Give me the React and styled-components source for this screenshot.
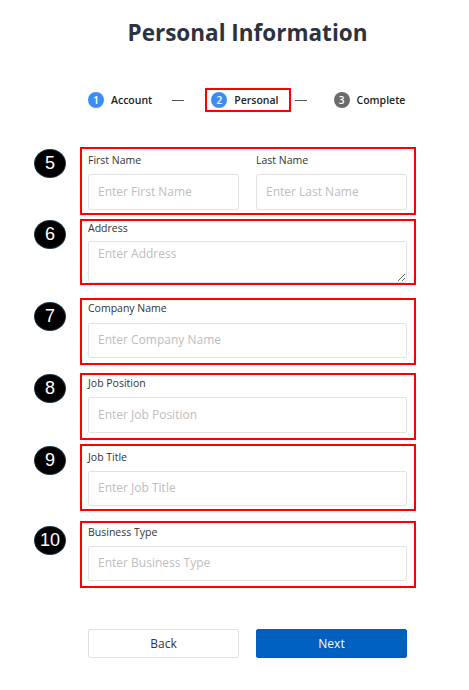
import React from "react";
import styled, { createGlobalStyle } from "styled-components";

const GlobalStyle = createGlobalStyle`
  body {
    margin: 0;
    background: #fff;
    font-family: "Open Sans", "Noto Sans", Arial, sans-serif;
  }
`;

const Page = styled.div`
  width: 469px;
  padding-bottom: 30px;
`;

const Title = styled.h1`
  margin: 0;
  padding-top: 18px;
  font-size: 22.5px;
  line-height: 30px;
  font-weight: 700;
  color: #2c333f;
  text-align: center;
  padding-left: 26px;
`;

const Stepper = styled.div`
  display: flex;
  align-items: center;
  margin-top: 40px;
  padding-left: 82px;
`;

const Step = styled.div`
  display: flex;
  align-items: center;
  gap: 7px;
  height: 20px;
  padding: 0 10px 0 4px;
  border: 2px solid ${(p) => (p.$boxed ? "#ff0000" : "transparent")};
  font-size: 10.5px;
  font-weight: 600;
  color: #222;
`;

const StepDot = styled.span`
  width: 16px;
  height: 16px;
  border-radius: 50%;
  background: ${(p) => (p.$done ? "#3b8cf5" : "#6b6b6b")};
  color: #fff;
  font-size: 10px;
  font-weight: 600;
  display: flex;
  align-items: center;
  justify-content: center;
`;

const Dash = styled.span`
  width: 12px;
  height: 1px;
  background: #555;
  margin: 0 21px 0 ${(p) => p.$ml}px;
`;

const Form = styled.div`
  margin-top: 35px;
`;

const Row = styled.div`
  display: flex;
  align-items: flex-start;
  padding-left: 35px;
  margin-top: ${(p) => p.$mt}px;
`;

const Badge = styled.div`
  width: 30px;
  height: 27px;
  margin-top: ${(p) => p.$bt}px;
  border-radius: 50%;
  background: #000;
  box-shadow: 0 0 0 1px #1c3645;
  color: #fff;
  font-family: "Liberation Sans", Arial, sans-serif;
  font-size: 18px;
  display: flex;
  align-items: center;
  justify-content: center;
  flex-shrink: 0;
`;

const Box = styled.div`
  box-sizing: border-box;
  width: 336px;
  margin-left: 15px;
  border: 2px solid #ff0000;
  padding: ${(p) => p.$pt}px 7px ${(p) => p.$pb}px 6px;
`;

const Cols = styled.div`
  display: grid;
  grid-template-columns: 1fr 1fr;
  gap: 17px;
`;

const Field = styled.label`
  display: flex;
  flex-direction: column;
`;

const Label = styled.span`
  font-size: 10.5px;
  line-height: 15px;
  color: #333;
  margin-bottom: ${(p) => p.$gap ?? 6}px;
`;

const Input = styled.input`
  box-sizing: border-box;
  width: 100%;
  height: ${(p) => p.$h ?? 36}px;
  border: 1px solid #e3e3e3;
  border-radius: 2px;
  padding: 0 9px 2px;
  font-family: inherit;
  font-size: 12px;
  color: #333;
  outline: none;
  &::placeholder {
    color: #bdbdbd;
  }
`;

const TextArea = styled.textarea`
  box-sizing: border-box;
  width: 100%;
  height: 42px;
  display: block;
  border: 1px solid #e3e3e3;
  border-radius: 2px;
  padding: 3px 9px;
  font-family: inherit;
  font-size: 12px;
  line-height: 17px;
  color: #333;
  outline: none;
  resize: vertical;
  &::placeholder {
    color: #bdbdbd;
  }
`;

const Actions = styled.div`
  display: grid;
  grid-template-columns: 151px 151px;
  gap: 17px;
  padding-left: 88px;
  margin-top: 41px;
`;

const Button = styled.button`
  height: 29px;
  border-radius: 2px;
  border: 1px solid ${(p) => (p.$primary ? "#0060bf" : "#e0e0e0")};
  background: ${(p) => (p.$primary ? "#0060bf" : "#fff")};
  color: ${(p) => (p.$primary ? "#fff" : "#333")};
  font-family: inherit;
  font-size: 12px;
  cursor: pointer;
`;

const rows = [
  { n: 9, label: "Job Title", mt: 4, bt: 3, pt: 4, pb: 3, h: 35 },
  { n: 10, label: "Business Type", mt: 10, bt: 6, pt: 2, pb: 5, h: 35 },
];

export default function App() {
  return (
    <Page>
      <GlobalStyle />
      <Title>Personal Information</Title>

      <Stepper>
        <Step>
          <StepDot $done>1</StepDot>
          Account
        </Step>
        <Dash $ml={8} />
        <Step $boxed>
          <StepDot $done>2</StepDot>
          Personal
        </Step>
        <Dash $ml={4} />
        <Step>
          <StepDot>3</StepDot>
          Complete
        </Step>
      </Stepper>

      <Form>
        <Row $mt={0}>
          <Badge $bt={3}>5</Badge>
          <Box $pt={4} $pb={3}>
            <Cols>
              <Field>
                <Label>First Name</Label>
                <Input placeholder="Enter First Name" />
              </Field>
              <Field>
                <Label>Last Name</Label>
                <Input placeholder="Enter Last Name" />
              </Field>
            </Cols>
          </Box>
        </Row>

        <Row $mt={4}>
          <Badge $bt={2}>6</Badge>
          <Box $pt={0} $pb={0}>
            <Field>
              <Label $gap={5}>Address</Label>
              <TextArea placeholder="Enter Address" />
            </Field>
          </Box>
        </Row>

        <Row $mt={13}>
          <Badge $bt={5}>7</Badge>
          <Box $pt={1} $pb={5}>
            <Field>
              <Label $gap={7}>Company Name</Label>
              <Input $h={35} placeholder="Enter Company Name" />
            </Field>
          </Box>
        </Row>

        <Row $mt={8}>
          <Badge $bt={2}>8</Badge>
          <Box $pt={1} $pb={5}>
            <Field>
              <Label>Job Position</Label>
              <Input placeholder="Enter Job Position" />
            </Field>
          </Box>
        </Row>

        {rows.map((r) => (
          <Row key={r.n} $mt={r.mt}>
            <Badge $bt={r.bt}>{r.n}</Badge>
            <Box $pt={r.pt} $pb={r.pb}>
              <Field>
                <Label>{r.label}</Label>
                <Input $h={r.h} placeholder={`Enter ${r.label}`} />
              </Field>
            </Box>
          </Row>
        ))}
      </Form>

      <Actions>
        <Button>Back</Button>
        <Button $primary>Next</Button>
      </Actions>
    </Page>
  );
}
